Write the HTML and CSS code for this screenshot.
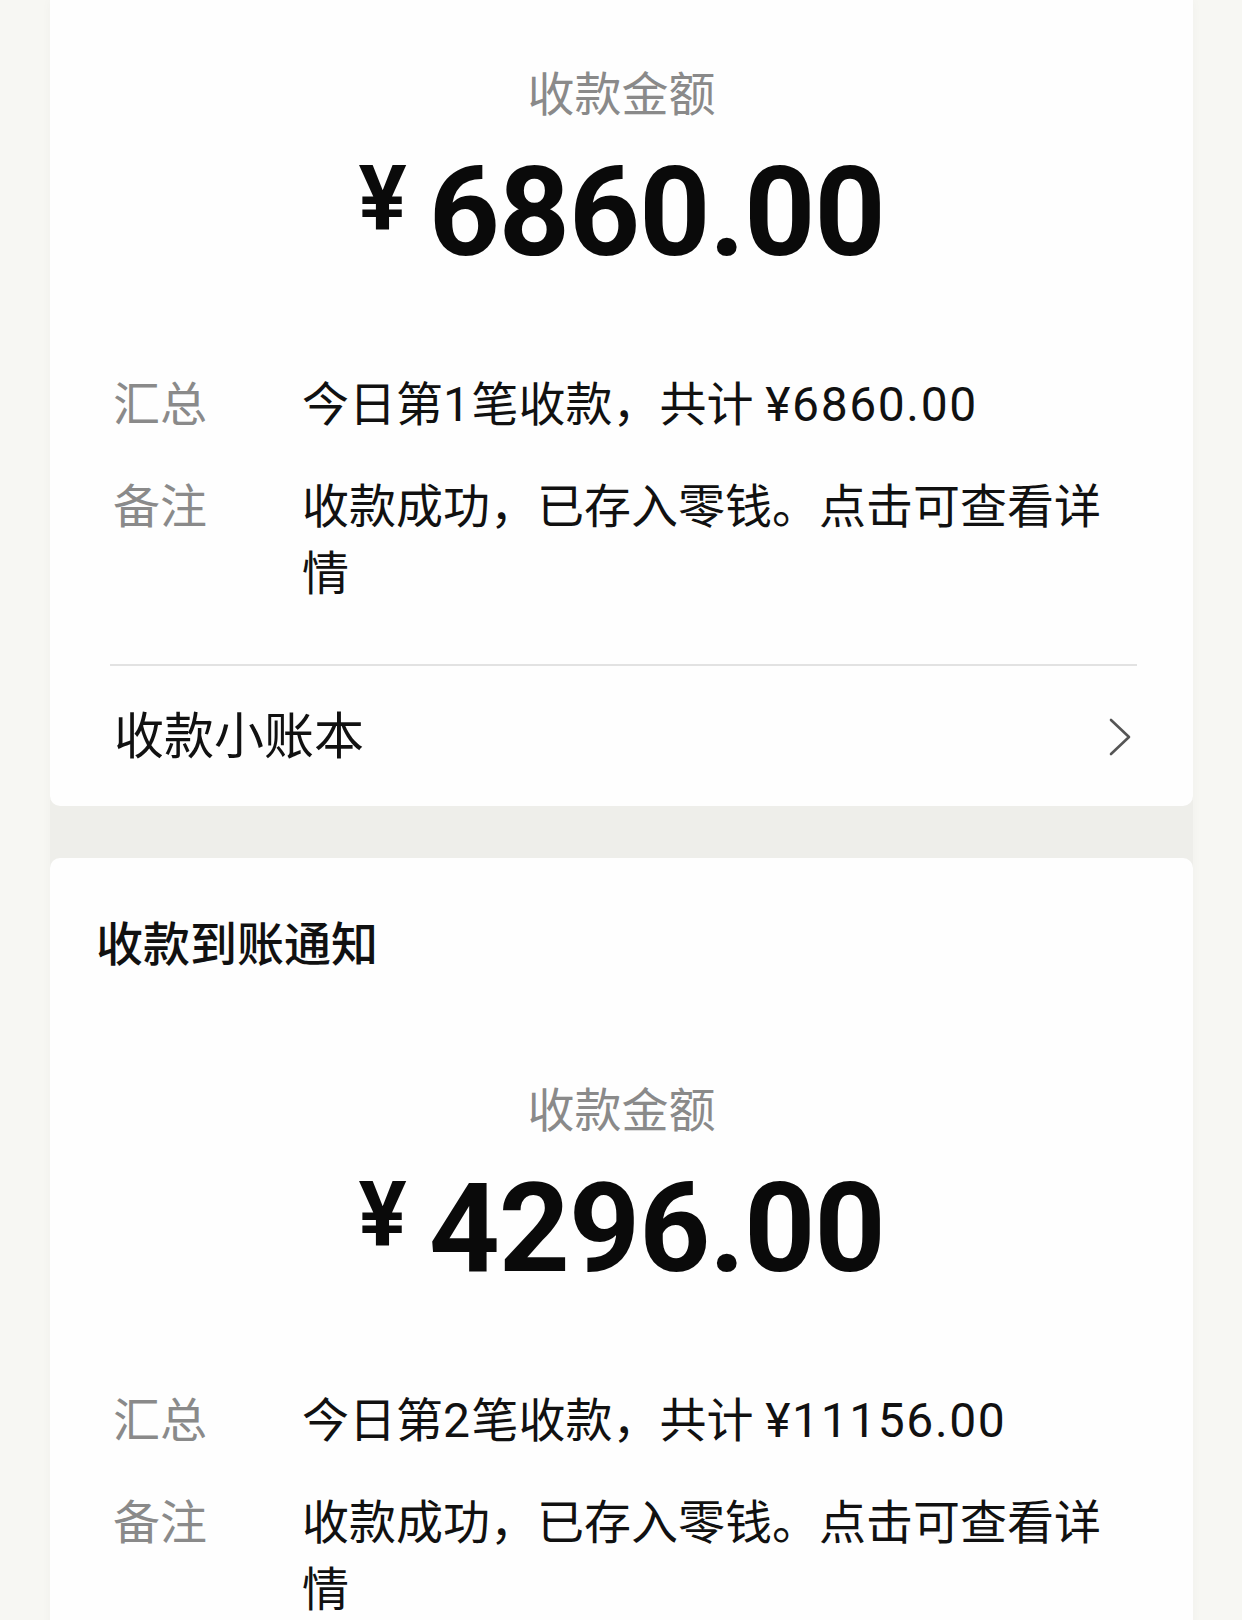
FILE: index.html
```html
<!DOCTYPE html>
<html lang="zh-CN">
<head>
<meta charset="utf-8">
<title>收款到账通知</title>
<link rel="stylesheet" href="styles.css">
</head>
<body>
<main class="feed">
  <section class="card card--cut">
    <div class="amount-block">
      <div class="amount-label">收款金额</div>
      <div class="amount"><span class="amount-currency">¥</span><span class="amount-value">6860.00</span></div>
    </div>
    <dl class="details">
      <div class="detail-row">
        <dt>汇总</dt>
        <dd>今日第<span class="num">1</span>笔收款，共计 <span class="num">¥6860.00</span></dd>
      </div>
      <div class="detail-row">
        <dt>备注</dt>
        <dd>收款成功，已存入零钱。点击可查看详情</dd>
      </div>
    </dl>
    <a class="ledger-link" href="#">
      <span>收款小账本</span>
      <svg class="chevron" viewBox="0 0 24 38" width="24" height="38" aria-hidden="true">
        <path d="M3 2 L21 19 L3 36" fill="none" stroke="#555" stroke-width="2.6" stroke-linecap="round" stroke-linejoin="round"/>
      </svg>
    </a>
  </section>

  <section class="card">
    <h2 class="card-title">收款到账通知</h2>
    <div class="amount-block amount-block--titled">
      <div class="amount-label">收款金额</div>
      <div class="amount"><span class="amount-currency">¥</span><span class="amount-value">4296.00</span></div>
    </div>
    <dl class="details">
      <div class="detail-row">
        <dt>汇总</dt>
        <dd>今日第<span class="num">2</span>笔收款，共计 <span class="num">¥11156.00</span></dd>
      </div>
      <div class="detail-row">
        <dt>备注</dt>
        <dd>收款成功，已存入零钱。点击可查看详情</dd>
      </div>
    </dl>
    <a class="ledger-link" href="#">
      <span>收款小账本</span>
      <svg class="chevron" viewBox="0 0 24 38" width="24" height="38" aria-hidden="true">
        <path d="M3 2 L21 19 L3 36" fill="none" stroke="#555" stroke-width="2.6" stroke-linecap="round" stroke-linejoin="round"/>
      </svg>
    </a>
  </section>
</main>
</body>
</html>
```

FILE: styles.css
```css
html, body {
  margin: 0;
  padding: 0;
}

body {
  background: #f7f7f3;
  font-family: Roboto, "Noto Sans CJK SC", sans-serif;
  color: #111;
  overflow: hidden;
}

/* column of message cards, the grey band shows between them */
.feed {
  margin: 0 49px 0 50px;
  background: #eeeeea;
  display: flex;
  flex-direction: column;
  gap: 52px;
  box-shadow: 0 0 10px rgba(0, 0, 0, 0.03);
}

.card {
  background: #fefefe;
  border-radius: 10px;
}

/* first card is scrolled partly out of view */
.card--cut {
  border-top-left-radius: 0;
  border-top-right-radius: 0;
}

.card-title {
  margin: 0;
  padding: 57px 0 0 46px;
  font-size: 47px;
  line-height: 60px;
  font-weight: 500;
  color: #111;
}

.amount-block {
  display: flex;
  flex-direction: column;
  align-items: center;
  padding-top: 65px;
}

.amount-block--titled {
  padding-top: 106px;
}

.amount-label {
  font-size: 47px;
  line-height: 60px;
  color: #8a8a8a;
}

.amount {
  margin-top: 26px;
  display: flex;
  align-items: flex-start;
  line-height: 1;
  font-weight: 700;
  color: #0a0a0a;
}

.amount-currency {
  font-size: 90px;
  margin-top: 4px;
  margin-right: 22px;
}

.amount-value {
  font-size: 124px;
  letter-spacing: -1px;
}

.details {
  margin: 96px 56px 0 60px;
  display: flex;
  flex-direction: column;
  gap: 35px;
}

.detail-row {
  display: grid;
  grid-template-columns: 192px 1fr;
  font-size: 47px;
  line-height: 67px;
}

.detail-row dt {
  color: #8a8a8a;
  padding-left: 3px;
}

.detail-row dd {
  margin: 0;
  color: #111;
}

/* amounts and counts inside the summary line */
.num {
  font-size: 48px;
  letter-spacing: 1.6px;
}

.ledger-link {
  margin: 57px 56px 0 60px;
  border-top: 2px solid #e2e2e2;
  padding: 41px 5px 39px 4px;
  display: flex;
  align-items: center;
  justify-content: space-between;
  text-decoration: none;
  color: #111;
  font-size: 50px;
  line-height: 60px;
}

.chevron {
  display: block;
}
```
